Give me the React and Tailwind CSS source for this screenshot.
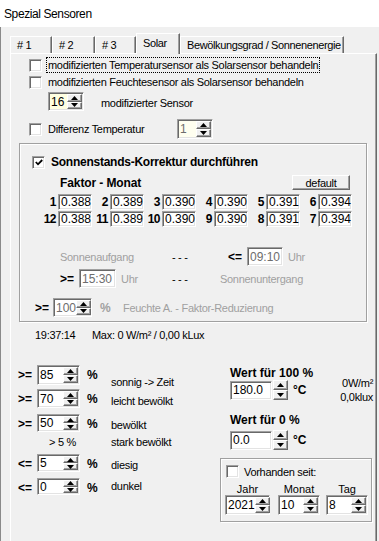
import React from 'react';

// klassische Win-Rahmen
const sunken =
  'border border-t-[#a0a0a0] border-l-[#a0a0a0] border-b-white border-r-white shadow-[inset_1px_1px_0_#696969,inset_-1px_-1px_0_#e3e3e3]';
const raised =
  'border border-t-white border-l-white border-b-[#696969] border-r-[#696969] shadow-[inset_-1px_-1px_0_#a0a0a0]';
const etched = 'border border-[#a0a0a0] shadow-[inset_1px_1px_0_#fff,1px_1px_0_#fff]';

function Tri({ up }) {
  return (
    <svg width="7" height="4" viewBox="0 0 7 4" className="block">
      <polygon points={up ? '3.5,0 7,4 0,4' : '0,0 7,0 3.5,4'} fill="#000" />
    </svg>
  );
}

function Arrows({ className = '' }) {
  return (
    <div className={`flex flex-col w-[15px] shrink-0 ${className}`}>
      <div className={`flex-1 flex items-center justify-center bg-[#f0f0f0] ${raised}`}>
        <Tri up />
      </div>
      <div className={`flex-1 flex items-center justify-center bg-[#f0f0f0] ${raised}`}>
        <Tri />
      </div>
    </div>
  );
}

function Spin({ value, className = '', bg = 'bg-white', dim = false }) {
  return (
    <div className={`flex shrink-0 p-[1px] ${sunken} ${bg} ${className}`}>
      <div className={`flex-1 flex items-center pl-[1px] text-[12px] tracking-normal ${dim ? 'text-[#6d6d6d]' : ''}`}>
        {value}
      </div>
      <Arrows />
    </div>
  );
}

function Box({ value, className = '', dim = false }) {
  return (
    <div
      className={`flex items-center shrink-0 bg-white pl-[2px] text-[12px] tracking-normal ${sunken} ${
        dim ? 'text-[#6d6d6d]' : ''
      } ${className}`}
    >
      {value}
    </div>
  );
}

function Check({ checked }) {
  return (
    <div className={`w-[13px] h-[13px] shrink-0 bg-white flex items-center justify-center ${sunken}`}>
      {checked && (
        <svg width="8" height="7" viewBox="0 0 8 7" className="block">
          <polyline points="0.8,3 3,5.3 7.2,1" fill="none" stroke="#000" strokeWidth="1.8" />
        </svg>
      )}
    </div>
  );
}

function Tab({ label, className = '', active = false }) {
  return (
    <div
      className={`flex items-center pl-[6px] whitespace-nowrap text-[11px] tracking-[-0.38px] border-t border-l border-r border-t-white border-l-white border-r-[#696969] shadow-[inset_-1px_0_0_#a0a0a0] ${
        active ? 'h-[21px] -mb-px relative z-10 bg-[#f0f0f0] pb-[3px]' : 'h-[17px]'
      } ${className}`}
    >
      {label}
    </div>
  );
}

const months = [
  ['1', '0.388'], ['2', '0.389'], ['3', '0.390'], ['4', '0.390'], ['5', '0.391'], ['6', '0.394'],
  ['12', '0.388'], ['11', '0.389'], ['10', '0.390'], ['9', '0.390'], ['8', '0.391'], ['7', '0.394'],
];

function LRow({ op, value, label, className = '', spinH = 'h-[19px]', labelMt = 'mt-[4px]' }) {
  return (
    <div className={`flex items-start ${className}`}>
      <span className="w-[19px] font-bold text-[12px] leading-[20px] tracking-normal">{op}</span>
      <Spin value={value} className={`w-[43px] ${spinH}`} />
      <span className="ml-[7px] w-[24px] font-bold text-[12px] leading-[20px]">%</span>
      <span className={labelMt}>{label}</span>
    </div>
  );
}

export default function App() {
  return (
    <div className="w-[379px] h-[541px] overflow-hidden bg-[#f0f0f0] text-black text-[11px] leading-[14px] tracking-[-0.3px] font-['Liberation_Sans',Arial,sans-serif] flex flex-col">
      {/* Titelleiste */}
      <div className="h-[27px] shrink-0 bg-white flex items-center pl-[4px] text-[12px] tracking-[-0.4px]">
        Spezial Sensoren
      </div>

      <div className="flex-1 flex flex-col border-l border-[#8a8a8a]">
        {/* Reiter */}
        <div className="h-[26px] shrink-0 flex items-end pl-[9px]">
          <Tab label="# 1" className="w-[42px]" />
          <Tab label="# 2" className="w-[43px]" />
          <Tab label="# 3" className="w-[41px]" />
          <Tab label="Solar" className="w-[44px]" active />
          <Tab label="Bewölkungsgrad / Sonnenenergie" className="w-[164px]" />
        </div>

        {/* Reiterseite Solar */}
        <div className="flex-1 flex flex-col ml-[9px] mr-[2px] border-t border-l border-r border-t-white border-l-white border-r-[#696969] shadow-[inset_-1px_0_0_#a0a0a0]">
          <div className="mt-[3px] h-[16px] flex items-center pl-[18px]">
            <Check />
            <span className="ml-[4px] px-[1px] h-[16px] flex items-center border border-dotted border-black">
              modifizierten Temperatursensor als Solarsensor behandeln
            </span>
          </div>
          <div className="mt-[1px] h-[16px] flex items-center pl-[18px]">
            <Check />
            <span className="ml-[6px]">modifizierten Feuchtesensor als Solarsensor behandeln</span>
          </div>
          <div className="mt-[2px] h-[19px] flex items-center pl-[37px]">
            <Spin value="16" className="w-[36px] h-[19px]" bg="bg-[#ffffe1]" />
            <span className="ml-[17px] mt-[2px]">modifizierter Sensor</span>
          </div>
          <div className="mt-[8px] h-[20px] flex items-center pl-[18px]">
            <Check />
            <span className="ml-[6px] w-[129px]">Differenz Temperatur</span>
            <Spin value="1" className="w-[36px] h-[20px]" bg="bg-[#fffff0]" dim />
          </div>

          {/* Sonnenstands-Korrektur */}
          <div className={`mt-[4px] ml-[8px] w-[348px] h-[179px] shrink-0 flex flex-col ${etched}`}>
            <div className="mt-[11px] h-[14px] flex items-center pl-[12px]">
              <Check checked />
              <span className="ml-[6px] font-bold text-[12px] tracking-[-0.25px]">
                Sonnenstands-Korrektur durchführen
              </span>
            </div>
            <div className="mt-[6px] h-[15px] flex items-center pl-[40px]">
              <span className="w-[232px] font-bold text-[12px] tracking-[-0.1px]">Faktor - Monat</span>
              <div className={`w-[58px] h-[15px] flex items-center justify-center bg-[#f0f0f0] ${raised}`}>
                default
              </div>
            </div>
            <div className="mt-[4px] pl-[20px] grid grid-cols-[repeat(6,52px)] gap-y-[1px]">
              {months.map(([m, v]) => (
                <div key={m} className="flex items-center h-[16px]">
                  <span className="w-[18px] pr-[2px] text-right font-bold text-[12px] tracking-[-0.5px]">{m}</span>
                  <Box value={v} className="w-[34px] h-[16px]" />
                </div>
              ))}
            </div>

            <div className="mt-[20px] h-[19px] flex items-center pl-[40px]">
              <span className="w-[112px] text-[#a0a0a0]">Sonnenaufgang</span>
              <span className="w-[56px]">- - -</span>
              <span className="w-[19px] font-bold text-[12px] tracking-normal">&lt;=</span>
              <Box value="09:10" className="w-[36px] h-[19px]" dim />
              <span className="ml-[5px] text-[#a0a0a0]">Uhr</span>
            </div>
            <div className="mt-[3px] h-[19px] flex items-center pl-[40px]">
              <span className="w-[19px] font-bold text-[12px] tracking-normal">&gt;=</span>
              <Box value="15:30" className="w-[37px] h-[19px]" dim />
              <span className="ml-[5px] w-[51px] text-[#a0a0a0]">Uhr</span>
              <span className="w-[48px]">- - -</span>
              <span className="text-[#a0a0a0]">Sonnenuntergang</span>
            </div>
            <div className="mt-[10px] h-[19px] flex items-center pl-[15px]">
              <span className="w-[18px] font-bold text-[12px] tracking-normal">&gt;=</span>
              <Spin value="100" className="w-[39px] h-[19px]" dim />
              <span className="ml-[8px] w-[23px] font-bold text-[12px] text-[#a0a0a0]">%</span>
              <span className="text-[#a0a0a0]">Feuchte A. - Faktor-Reduzierung</span>
            </div>
          </div>

          <div className="mt-[6px] h-[14px] flex items-center pl-[24px]">
            <span className="w-[57px]">19:37:14</span>
            <span>Max: 0 W/m² / 0,00 kLux</span>
          </div>

          {/* Bewölkung */}
          <div className="mt-[23px] flex">
            <div className="w-[209px] shrink-0 pl-[7px] flex flex-col">
              <LRow op=">=" value="85" label="sonnig -> Zeit" className="h-[24px]" spinH="h-[20px]" labelMt="mt-[10px]" />
              <LRow op=">=" value="70" label="leicht bewölkt" className="h-[25px]" labelMt="mt-[5px]" />
              <LRow op=">=" value="50" label="bewölkt" className="h-[21px]" spinH="h-[18px]" labelMt="mt-[4px]" />
              <div className="h-[19px] flex items-start">
                <span className="ml-[31px] w-[62px]">&gt; 5 %</span>
                <span>stark bewölkt</span>
              </div>
              <LRow op="<=" value="5" label="diesig" className="h-[24px]" spinH="h-[18px]" labelMt="mt-[4px]" />
              <LRow op="<=" value="0" label="dunkel" className="h-[24px]" spinH="h-[17px]" labelMt="mt-[1px]" />
            </div>

            <div className="flex-1 flex flex-col">
              <div className="h-[15px] pl-[10px] flex items-center font-bold text-[12px] tracking-normal">
                Wert für 100 %
              </div>
              <div className="h-[20px] pl-[10px] flex items-center">
                <Box value="180.0" className="w-[42px] h-[19px]" />
                <Arrows className="ml-[1px] h-[20px]" />
                <span className="ml-[5px] font-bold text-[12px] tracking-normal">°C</span>
                <div className="ml-auto mr-[3px] flex flex-col items-end">
                  <span>0W/m²</span>
                  <span>0,0klux</span>
                </div>
              </div>
              <div className="mt-[12px] h-[15px] pl-[10px] flex items-center font-bold text-[12px] tracking-normal">
                Wert für 0 %
              </div>
              <div className="mt-[3px] h-[20px] pl-[10px] flex items-center">
                <Box value="0.0" className="w-[42px] h-[19px]" />
                <Arrows className="ml-[1px] h-[20px]" />
                <span className="ml-[5px] font-bold text-[12px] tracking-normal">°C</span>
              </div>

              {/* Vorhanden seit */}
              <div className={`mt-[8px] w-[152px] h-[64px] flex flex-col ${etched}`}>
                <div className="mt-[6px] h-[13px] flex items-center pl-[5px]">
                  <Check />
                  <span className="ml-[5px]">Vorhanden seit:</span>
                </div>
                <div className="mt-[4px] h-[13px] pl-[4px] flex items-center tracking-normal">
                  <span className="w-[45px] text-center">Jahr</span>
                  <span className="ml-[8px] w-[42px] text-center">Monat</span>
                  <span className="ml-[6px] w-[42px] text-center">Tag</span>
                </div>
                <div className="h-[20px] pl-[4px] flex items-center">
                  <Spin value="2021" className="w-[45px] h-[20px]" />
                  <Spin value="10" className="ml-[8px] w-[42px] h-[20px]" />
                  <Spin value="8" className="ml-[6px] w-[42px] h-[20px]" />
                </div>
              </div>
            </div>
          </div>
        </div>
      </div>
    </div>
  );
}
